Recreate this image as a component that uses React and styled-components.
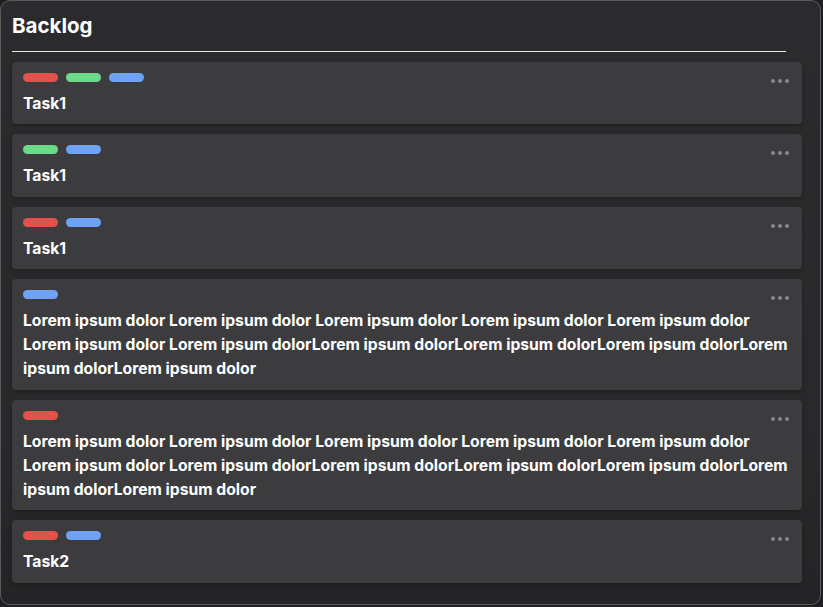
import styled, { createGlobalStyle } from "styled-components";

const GlobalStyle = createGlobalStyle`
  html, body {
    margin: 0;
    padding: 0;
    background: #1f1f21;
  }
  body {
    font-family: Inter, "Noto Sans", sans-serif;
  }
`;

const Column = styled.div`
  box-sizing: border-box;
  width: 821px;
  height: 605px;
  padding: 13px 18px 12px 11px;
  border: 1px solid #5a5a5c;
  border-radius: 10px;
  background: linear-gradient(180deg, #2b2b2d 0%, #29292b 70%, #242426 100%);
  display: flex;
  flex-direction: column;
  gap: 10.1px;
`;

const Header = styled.div`
  width: 774px;
  padding-bottom: 13px;
  border-bottom: 1px solid #e8e8e8;
`;

const Title = styled.h2`
  margin: 0;
  color: #ffffff;
  font-size: 20.5px;
  font-weight: 700;
  line-height: 24px;
`;

const Card = styled.div`
  position: relative;
  box-sizing: border-box;
  width: 790px;
  padding: 11px 12px 8px 11px;
  border-radius: 4px;
  background: #3c3c3e;
  box-shadow: 0 2px 4px rgba(0, 0, 0, 0.25);
`;

const Tags = styled.div`
  display: flex;
  gap: 8px;
  margin-bottom: 10px;
`;

const Tag = styled.span`
  width: 35px;
  height: 9px;
  border-radius: 5px;
  background: ${({ color }) => color};
`;

const CardText = styled.div`
  color: #ffffff;
  font-size: 15.7px;
  font-weight: 700;
  line-height: 24.2px;
`;

const Menu = styled.div`
  position: absolute;
  top: 17px;
  right: 13px;
  display: flex;
  gap: 3px;
`;

const Dot = styled.span`
  width: 4px;
  height: 4px;
  border-radius: 50%;
  background: #8a8a8c;
`;

const colors = {
  red: "#e2514b",
  green: "#6bdb8a",
  blue: "#6fa1f6",
};

const lorem =
  "Lorem ipsum dolor Lorem ipsum dolor Lorem ipsum dolor Lorem ipsum dolor Lorem ipsum dolor Lorem ipsum dolor Lorem ipsum dolorLorem ipsum dolorLorem ipsum dolorLorem ipsum dolorLorem ipsum dolorLorem ipsum dolor";

const tasks = [
  { id: 1, tags: ["red", "green", "blue"], text: "Task1" },
  { id: 2, tags: ["green", "blue"], text: "Task1" },
  { id: 3, tags: ["red", "blue"], text: "Task1" },
  { id: 4, tags: ["blue"], text: lorem },
  { id: 5, tags: ["red"], text: lorem },
  { id: 6, tags: ["red", "blue"], text: "Task2" },
];

export default function App() {
  return (
    <>
      <GlobalStyle />
      <Column>
        <Header>
          <Title>Backlog</Title>
        </Header>
        {tasks.map((task) => (
          <Card key={task.id}>
            <Tags>
              {task.tags.map((t) => (
                <Tag key={t} color={colors[t]} />
              ))}
            </Tags>
            <CardText>{task.text}</CardText>
            <Menu>
              <Dot />
              <Dot />
              <Dot />
            </Menu>
          </Card>
        ))}
      </Column>
    </>
  );
}
